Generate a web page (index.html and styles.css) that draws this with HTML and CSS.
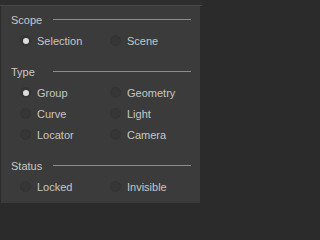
FILE: index.html
```html
<!DOCTYPE html>
<html>
<head>
<meta charset="utf-8">
<link rel="stylesheet" href="styles.css">
</head>
<body>
<div class="topbar"></div>
<div class="panel">
  <section class="group">
    <div class="head"><span class="title">Scope</span><span class="rule"></span></div>
    <div class="grid">
      <label class="opt"><span class="radio on"></span>Selection</label>
      <label class="opt"><span class="radio"></span>Scene</label>
    </div>
  </section>
  <section class="group">
    <div class="head"><span class="title">Type</span><span class="rule"></span></div>
    <div class="grid">
      <label class="opt"><span class="radio on"></span>Group</label>
      <label class="opt"><span class="radio"></span>Geometry</label>
      <label class="opt"><span class="radio"></span>Curve</label>
      <label class="opt"><span class="radio"></span>Light</label>
      <label class="opt"><span class="radio"></span>Locator</label>
      <label class="opt"><span class="radio"></span>Camera</label>
    </div>
  </section>
  <section class="group">
    <div class="head"><span class="title">Status</span><span class="rule"></span></div>
    <div class="grid">
      <label class="opt"><span class="radio"></span>Locked</label>
      <label class="opt"><span class="radio"></span>Invisible</label>
    </div>
  </section>
</div>
</body>
</html>
```
FILE: styles.css
```css
html, body {
  margin: 0;
  padding: 0;
  background: #2b2b2b;
  width: 202px;
  height: 205px;
  overflow: hidden;
}
body {
  font-family: "Liberation Sans", Arial, sans-serif;
  font-size: 11px;
  color: #c6c6c6;
}
.topbar {
  height: 5px;
  background: #2e2e2e;
  border-bottom: 1px solid #474747;
}
.panel {
  box-sizing: border-box;
  height: 197px;
  margin: 0 2px 0 1px;
  background: #3b3b3b;
  padding: 3px 0 0 10px;
}
.group + .group {
  margin-top: 10px;
}
.head {
  display: flex;
  align-items: center;
  height: 21px;
}
.title {
  width: 42px;
  color: #c8c8c8;
}
.rule {
  width: 138px;
  height: 1px;
  background: #8c8c8c;
}
.grid {
  display: grid;
  grid-template-columns: 90px 90px;
  padding-left: 9px;
}
.opt {
  display: flex;
  align-items: center;
  height: 21px;
  gap: 6px;
}
.radio {
  box-sizing: border-box;
  width: 11px;
  height: 11px;
  border-radius: 50%;
  background: #363636;
  border: 1px solid #333333;
  display: flex;
  align-items: center;
  justify-content: center;
}
.radio.on::after {
  content: "";
  width: 6px;
  height: 6px;
  border-radius: 50%;
  background: #dcdcdc;
}
```
